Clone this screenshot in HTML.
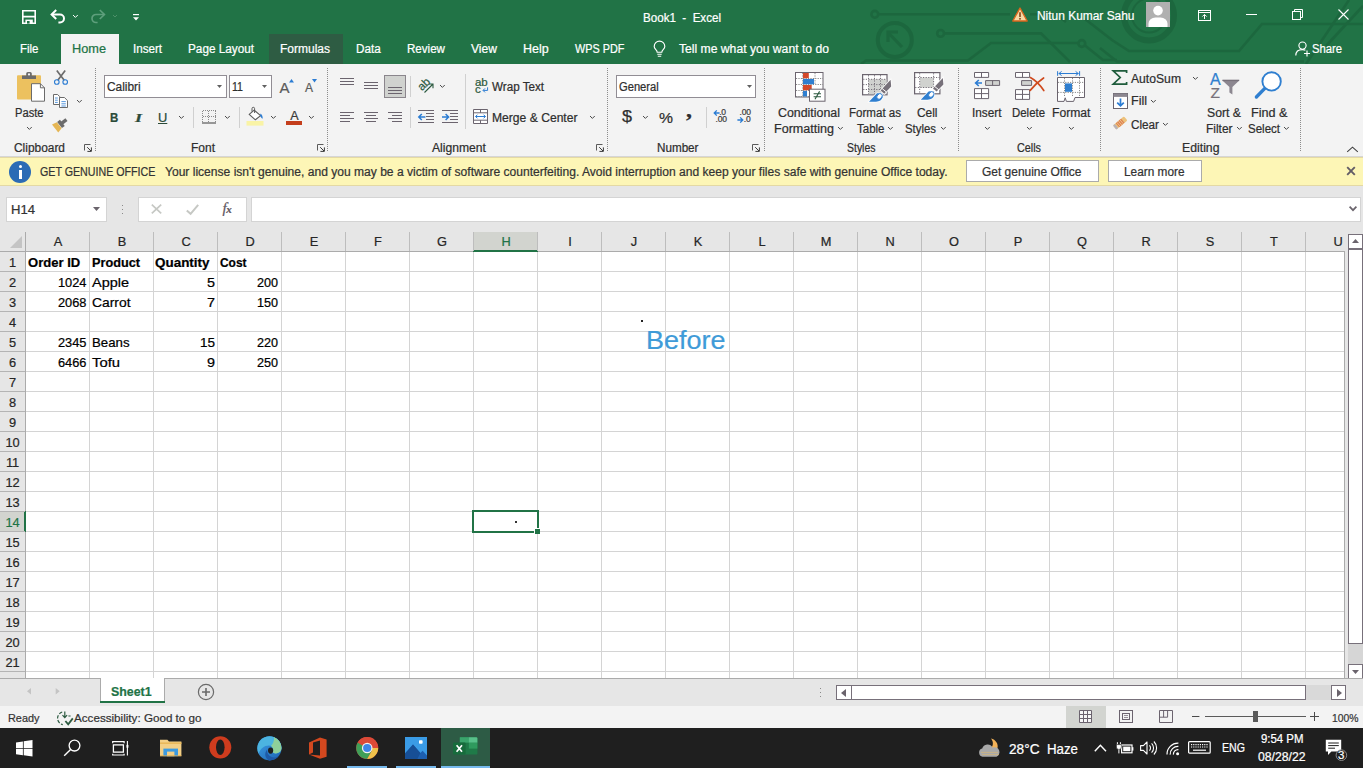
<!DOCTYPE html>
<html lang="en"><head><meta charset="utf-8"><title>Book1 - Excel</title>
<style>

*{box-sizing:border-box;margin:0;padding:0}
html,body{width:1363px;height:768px;overflow:hidden;background:#fff;font-family:"Liberation Sans",sans-serif}
body{position:relative}
.a{position:absolute}
.t{position:absolute;white-space:pre;line-height:1;transform-origin:0 50%;-webkit-text-stroke:.22px currentColor}
svg{position:absolute;overflow:visible}
.vs{position:absolute;width:0;border-left:1px dotted #8c8c8c}
.box{position:absolute;background:#fff;border:1px solid #918d94}

</style></head>
<body>
<div class="a" style="left:0px;top:0px;width:1363px;height:64px;background:#217346;"></div>
<svg style="left:840px;top:0" width="523" height="64" viewBox="840 0 523 64" fill="none" stroke="#1b633b" stroke-width="2.6" opacity=".7">
<circle cx="874.8" cy="14.3" r="3.4"/><path d="M878.6 14.3H1010M1030 14.3H1056L1066 22"/>
<circle cx="894.8" cy="40" r="17" stroke-width="4"/><path d="M902 47L888 32.5M888 42V32H898" stroke-width="3.2"/>
<circle cx="940.6" cy="33.4" r="3.4"/><path d="M944.4 33.4H1041L1070 62"/>
<path d="M861 64L866 60.5H968L991 43H1078"/><circle cx="1081.8" cy="43.5" r="3.4"/><path d="M1085 45.6L1103 60H1117"/>
<path d="M1085 19L1112 40L1129 51H1239L1262 24H1363"/>
<path d="M1100 48L1117 61.5H1304"/><path d="M1306 64L1349 0"/><path d="M1326 46L1363 6"/>
<circle cx="1149" cy="15.4" r="25" stroke-width="6"/><circle cx="1149" cy="15.4" r="17" stroke-width="2"/>
</svg>
<div class="a" style="left:61px;top:34px;width:58px;height:30px;background:#f3f3f3;"></div>
<div class="a" style="left:269px;top:34px;width:74px;height:30px;background:#2e5c43;"></div>
<div class="a" style="left:0px;top:64px;width:1363px;height:93px;background:#f3f3f3;"></div>
<div class="a" style="left:0px;top:156px;width:1363px;height:1px;background:#d6d6d6;"></div>
<div class="vs" style="left:95px;top:68px;height:83px"></div>
<div class="vs" style="left:327px;top:68px;height:83px"></div>
<div class="vs" style="left:607px;top:68px;height:83px"></div>
<div class="vs" style="left:764px;top:68px;height:83px"></div>
<div class="vs" style="left:958px;top:68px;height:83px"></div>
<div class="vs" style="left:1100px;top:68px;height:83px"></div>
<div class="vs" style="left:1300px;top:68px;height:83px"></div>
<div class="a" style="left:193px;top:107px;width:1px;height:21px;background:#d0d0d0;"></div>
<div class="a" style="left:239px;top:107px;width:1px;height:21px;background:#d0d0d0;"></div>
<div class="a" style="left:410px;top:76px;width:1px;height:21px;background:#d0d0d0;"></div>
<div class="a" style="left:410px;top:107px;width:1px;height:21px;background:#d0d0d0;"></div>
<div class="a" style="left:465px;top:74px;width:1px;height:55px;background:#d0d0d0;"></div>
<div class="a" style="left:706px;top:107px;width:1px;height:21px;background:#d0d0d0;"></div>
<div class="box" style="left:104px;top:75px;width:123px;height:23px;"></div>
<div class="box" style="left:229px;top:75px;width:43px;height:23px;"></div>
<div class="box" style="left:616px;top:75px;width:140px;height:23px;"></div>
<div class="a" style="left:384px;top:75px;width:22px;height:23px;background:#d0d2cf;border:1px solid #8a858c;"></div>
<div class="a" style="left:0px;top:157px;width:1363px;height:29px;background:#fdf6b6;border-top:1px solid #e4d9a4;border-bottom:1px solid #e4d9a4;"></div>
<div class="a" style="left:9px;top:161px;width:22px;height:22px;border-radius:50%;background:#2b6bb5"></div>
<div class="a" style="left:19px;top:165px;width:3px;height:3px;background:#fff;border-radius:50%;"></div>
<div class="a" style="left:19px;top:170px;width:3px;height:9px;background:#fff;"></div>
<div class="a" style="left:966px;top:160px;width:133px;height:22px;background:#fff;border:1px solid #ababab;"></div>
<div class="a" style="left:1108px;top:160px;width:94px;height:22px;background:#fff;border:1px solid #ababab;"></div>
<div class="a" style="left:0px;top:186px;width:1363px;height:46px;background:#e6e6e6;"></div>
<div class="a" style="left:6px;top:197px;width:101px;height:25px;background:#fff;border:1px solid #d4d4d4;"></div>
<div class="a" style="left:138px;top:197px;width:109px;height:25px;background:#fff;border:1px solid #d4d4d4;"></div>
<div class="a" style="left:251px;top:197px;width:1110px;height:25px;background:#fff;border:1px solid #d4d4d4;"></div>
<div class="a" style="left:122px;top:205px;width:1px;height:1px;background:#8a8a8a;"></div>
<div class="a" style="left:122px;top:209px;width:1px;height:1px;background:#8a8a8a;"></div>
<div class="a" style="left:122px;top:213px;width:1px;height:1px;background:#8a8a8a;"></div>
<div class="a" style="left:0px;top:232px;width:1345px;height:20px;background:#e6e6e6;"></div>
<div class="a" style="left:0px;top:252px;width:26px;height:426px;background:#e6e6e6;"></div>
<div class="a" style="left:473px;top:232px;width:65px;height:20px;background:#d2d4cf;"></div>
<div class="a" style="left:473px;top:250px;width:65px;height:2px;background:#217346;"></div>
<div class="a" style="left:0px;top:511px;width:26px;height:21px;background:#d2d4cf;"></div>
<div class="a" style="left:24px;top:511px;width:2px;height:21px;background:#217346;"></div>
<div class="a" style="left:0px;top:251px;width:1345px;height:1px;background:#ababab;z-index:0;"></div>
<div class="a" style="left:25px;top:232px;width:1px;height:446px;background:#ababab;"></div>
<div class="a" style="left:473px;top:250px;width:65px;height:2px;background:#217346;"></div>
<div class="a" style="left:24px;top:511px;width:2px;height:21px;background:#217346;"></div>
<div class="a" style="left:89px;top:252px;width:1px;height:426px;background:#d4d4d4"></div>
<div class="a" style="left:89px;top:232px;width:1px;height:19px;background:#bdbdbd"></div>
<div class="a" style="left:153px;top:252px;width:1px;height:426px;background:#d4d4d4"></div>
<div class="a" style="left:153px;top:232px;width:1px;height:19px;background:#bdbdbd"></div>
<div class="a" style="left:217px;top:252px;width:1px;height:426px;background:#d4d4d4"></div>
<div class="a" style="left:217px;top:232px;width:1px;height:19px;background:#bdbdbd"></div>
<div class="a" style="left:281px;top:252px;width:1px;height:426px;background:#d4d4d4"></div>
<div class="a" style="left:281px;top:232px;width:1px;height:19px;background:#bdbdbd"></div>
<div class="a" style="left:345px;top:252px;width:1px;height:426px;background:#d4d4d4"></div>
<div class="a" style="left:345px;top:232px;width:1px;height:19px;background:#bdbdbd"></div>
<div class="a" style="left:409px;top:252px;width:1px;height:426px;background:#d4d4d4"></div>
<div class="a" style="left:409px;top:232px;width:1px;height:19px;background:#bdbdbd"></div>
<div class="a" style="left:473px;top:252px;width:1px;height:426px;background:#d4d4d4"></div>
<div class="a" style="left:473px;top:232px;width:1px;height:19px;background:#bdbdbd"></div>
<div class="a" style="left:537px;top:252px;width:1px;height:426px;background:#d4d4d4"></div>
<div class="a" style="left:537px;top:232px;width:1px;height:19px;background:#bdbdbd"></div>
<div class="a" style="left:601px;top:252px;width:1px;height:426px;background:#d4d4d4"></div>
<div class="a" style="left:601px;top:232px;width:1px;height:19px;background:#bdbdbd"></div>
<div class="a" style="left:665px;top:252px;width:1px;height:426px;background:#d4d4d4"></div>
<div class="a" style="left:665px;top:232px;width:1px;height:19px;background:#bdbdbd"></div>
<div class="a" style="left:729px;top:252px;width:1px;height:426px;background:#d4d4d4"></div>
<div class="a" style="left:729px;top:232px;width:1px;height:19px;background:#bdbdbd"></div>
<div class="a" style="left:793px;top:252px;width:1px;height:426px;background:#d4d4d4"></div>
<div class="a" style="left:793px;top:232px;width:1px;height:19px;background:#bdbdbd"></div>
<div class="a" style="left:857px;top:252px;width:1px;height:426px;background:#d4d4d4"></div>
<div class="a" style="left:857px;top:232px;width:1px;height:19px;background:#bdbdbd"></div>
<div class="a" style="left:921px;top:252px;width:1px;height:426px;background:#d4d4d4"></div>
<div class="a" style="left:921px;top:232px;width:1px;height:19px;background:#bdbdbd"></div>
<div class="a" style="left:985px;top:252px;width:1px;height:426px;background:#d4d4d4"></div>
<div class="a" style="left:985px;top:232px;width:1px;height:19px;background:#bdbdbd"></div>
<div class="a" style="left:1049px;top:252px;width:1px;height:426px;background:#d4d4d4"></div>
<div class="a" style="left:1049px;top:232px;width:1px;height:19px;background:#bdbdbd"></div>
<div class="a" style="left:1113px;top:252px;width:1px;height:426px;background:#d4d4d4"></div>
<div class="a" style="left:1113px;top:232px;width:1px;height:19px;background:#bdbdbd"></div>
<div class="a" style="left:1177px;top:252px;width:1px;height:426px;background:#d4d4d4"></div>
<div class="a" style="left:1177px;top:232px;width:1px;height:19px;background:#bdbdbd"></div>
<div class="a" style="left:1241px;top:252px;width:1px;height:426px;background:#d4d4d4"></div>
<div class="a" style="left:1241px;top:232px;width:1px;height:19px;background:#bdbdbd"></div>
<div class="a" style="left:1305px;top:252px;width:1px;height:426px;background:#d4d4d4"></div>
<div class="a" style="left:1305px;top:232px;width:1px;height:19px;background:#bdbdbd"></div>
<div class="a" style="left:26px;top:271px;width:1319px;height:1px;background:#d4d4d4"></div>
<div class="a" style="left:0;top:271px;width:25px;height:1px;background:#b4b4b4"></div>
<div class="a" style="left:26px;top:291px;width:1319px;height:1px;background:#d4d4d4"></div>
<div class="a" style="left:0;top:291px;width:25px;height:1px;background:#b4b4b4"></div>
<div class="a" style="left:26px;top:311px;width:1319px;height:1px;background:#d4d4d4"></div>
<div class="a" style="left:0;top:311px;width:25px;height:1px;background:#b4b4b4"></div>
<div class="a" style="left:26px;top:331px;width:1319px;height:1px;background:#d4d4d4"></div>
<div class="a" style="left:0;top:331px;width:25px;height:1px;background:#b4b4b4"></div>
<div class="a" style="left:26px;top:351px;width:1319px;height:1px;background:#d4d4d4"></div>
<div class="a" style="left:0;top:351px;width:25px;height:1px;background:#b4b4b4"></div>
<div class="a" style="left:26px;top:371px;width:1319px;height:1px;background:#d4d4d4"></div>
<div class="a" style="left:0;top:371px;width:25px;height:1px;background:#b4b4b4"></div>
<div class="a" style="left:26px;top:391px;width:1319px;height:1px;background:#d4d4d4"></div>
<div class="a" style="left:0;top:391px;width:25px;height:1px;background:#b4b4b4"></div>
<div class="a" style="left:26px;top:411px;width:1319px;height:1px;background:#d4d4d4"></div>
<div class="a" style="left:0;top:411px;width:25px;height:1px;background:#b4b4b4"></div>
<div class="a" style="left:26px;top:431px;width:1319px;height:1px;background:#d4d4d4"></div>
<div class="a" style="left:0;top:431px;width:25px;height:1px;background:#b4b4b4"></div>
<div class="a" style="left:26px;top:451px;width:1319px;height:1px;background:#d4d4d4"></div>
<div class="a" style="left:0;top:451px;width:25px;height:1px;background:#b4b4b4"></div>
<div class="a" style="left:26px;top:471px;width:1319px;height:1px;background:#d4d4d4"></div>
<div class="a" style="left:0;top:471px;width:25px;height:1px;background:#b4b4b4"></div>
<div class="a" style="left:26px;top:491px;width:1319px;height:1px;background:#d4d4d4"></div>
<div class="a" style="left:0;top:491px;width:25px;height:1px;background:#b4b4b4"></div>
<div class="a" style="left:26px;top:511px;width:1319px;height:1px;background:#d4d4d4"></div>
<div class="a" style="left:0;top:511px;width:25px;height:1px;background:#b4b4b4"></div>
<div class="a" style="left:26px;top:531px;width:1319px;height:1px;background:#d4d4d4"></div>
<div class="a" style="left:0;top:531px;width:25px;height:1px;background:#b4b4b4"></div>
<div class="a" style="left:26px;top:551px;width:1319px;height:1px;background:#d4d4d4"></div>
<div class="a" style="left:0;top:551px;width:25px;height:1px;background:#b4b4b4"></div>
<div class="a" style="left:26px;top:571px;width:1319px;height:1px;background:#d4d4d4"></div>
<div class="a" style="left:0;top:571px;width:25px;height:1px;background:#b4b4b4"></div>
<div class="a" style="left:26px;top:591px;width:1319px;height:1px;background:#d4d4d4"></div>
<div class="a" style="left:0;top:591px;width:25px;height:1px;background:#b4b4b4"></div>
<div class="a" style="left:26px;top:611px;width:1319px;height:1px;background:#d4d4d4"></div>
<div class="a" style="left:0;top:611px;width:25px;height:1px;background:#b4b4b4"></div>
<div class="a" style="left:26px;top:631px;width:1319px;height:1px;background:#d4d4d4"></div>
<div class="a" style="left:0;top:631px;width:25px;height:1px;background:#b4b4b4"></div>
<div class="a" style="left:26px;top:651px;width:1319px;height:1px;background:#d4d4d4"></div>
<div class="a" style="left:0;top:651px;width:25px;height:1px;background:#b4b4b4"></div>
<div class="a" style="left:26px;top:671px;width:1319px;height:1px;background:#d4d4d4"></div>
<div class="a" style="left:0;top:671px;width:25px;height:1px;background:#b4b4b4"></div>
<svg style="left:10px;top:236px" width="12" height="12" viewBox="0 0 12 12"><path d="M12 0V12H0Z" fill="#c4c4c4"/></svg>
<div class="a" style="left:472px;top:510px;width:67px;height:23px;border:2px solid #217346;background:#fff;"></div>
<div class="a" style="left:534px;top:528px;width:6px;height:6px;background:#217346;border-top:1px solid #fff;border-left:1px solid #fff;"></div>
<div class="a" style="left:641px;top:320px;width:2px;height:2px;background:#222;"></div>
<div class="a" style="left:515px;top:521px;width:2px;height:2px;background:#333;"></div>
<div class="a" style="left:1345px;top:232px;width:18px;height:446px;background:#e6e6e6;"></div>
<div class="a" style="left:1348px;top:644px;width:15px;height:20px;background:#d6d6d6;"></div>
<div class="a" style="left:1344px;top:252px;width:1px;height:426px;background:#ababab;"></div>
<div class="a" style="left:1348px;top:234px;width:15px;height:15px;background:#fff;border:1px solid #77707a;"></div>
<div class="a" style="left:1348px;top:249px;width:15px;height:395px;background:#fff;border:1px solid #77707a;"></div>
<div class="a" style="left:1348px;top:664px;width:15px;height:15px;background:#fff;border:1px solid #77707a;"></div>
<svg style="left:1352px;top:239px" width="7" height="4" viewBox="0 0 7 4"><path d="M0 4L3.5 0L7 4Z" fill="#6a636c"/></svg>
<svg style="left:1352px;top:670px" width="7" height="4" viewBox="0 0 7 4"><path d="M0 0L3.5 4L7 0Z" fill="#6a636c"/></svg>
<div class="a" style="left:0px;top:678px;width:1363px;height:28px;background:#e6e6e6;"></div>
<div class="a" style="left:0px;top:678px;width:1363px;height:1px;background:#ababab;"></div>
<div class="a" style="left:100px;top:678px;width:65px;height:25px;background:#fff;border-left:1px solid #ababab;border-right:1px solid #ababab;"></div>
<div class="a" style="left:100px;top:701px;width:65px;height:2px;background:#217346;"></div>
<svg style="left:27.3px;top:688.4px" width="34" height="7" viewBox="0 0 34 7"><path d="M4 0V6.4L0 3.2Z M28.7 0V6.4L32.7 3.2Z" fill="#c4c4c4"/></svg>
<svg style="left:197px;top:683px" width="18" height="18" viewBox="0 0 18 18" fill="none" stroke="#6a6a6a" stroke-width="1.2"><circle cx="9" cy="9" r="7.6"/><path d="M9 5V13M5 9H13" stroke-width="1.6"/></svg>
<div class="a" style="left:820px;top:688px;width:1px;height:1px;background:#8a8a8a;"></div>
<div class="a" style="left:820px;top:692px;width:1px;height:1px;background:#8a8a8a;"></div>
<div class="a" style="left:820px;top:696px;width:1px;height:1px;background:#8a8a8a;"></div>
<div class="a" style="left:836px;top:685px;width:16px;height:15px;background:#fff;border:1px solid #77707a;"></div>
<div class="a" style="left:851px;top:685px;width:455px;height:15px;background:#fff;border:1px solid #77707a;"></div>
<div class="a" style="left:1306px;top:685px;width:25px;height:15px;background:#d9d9d9;"></div>
<div class="a" style="left:1331px;top:685px;width:15px;height:15px;background:#fff;border:1px solid #77707a;"></div>
<svg style="left:841px;top:688.5px" width="5" height="8" viewBox="0 0 5 8"><path d="M5 0V8L0 4Z" fill="#6a636c"/></svg>
<svg style="left:1336.5px;top:688.5px" width="5" height="8" viewBox="0 0 5 8"><path d="M0 0V8L5 4Z" fill="#6a636c"/></svg>
<div class="a" style="left:0px;top:706px;width:1363px;height:22px;background:#f3f3f3;"></div>
<div class="a" style="left:1066px;top:706px;width:40px;height:22px;background:#d2d4d0;"></div>
<div class="a" style="left:1205px;top:716px;width:101px;height:1px;background:#5a5a5a;"></div>
<div class="a" style="left:1253px;top:711px;width:5px;height:11px;background:#5a5a5a;"></div>
<div class="a" style="left:0px;top:728px;width:1363px;height:40px;background:#1f1f1f;"></div>
<div class="a" style="left:441px;top:728px;width:49px;height:40px;background:#2d5b45;"></div>
<div class="a" style="left:347px;top:766px;width:40px;height:2px;background:#76b9ed;"></div>
<div class="a" style="left:396px;top:766px;width:40px;height:2px;background:#76b9ed;"></div>
<div class="a" style="left:441px;top:766px;width:49px;height:2px;background:#76b9ed;"></div>
<svg style="left:22px;top:10px" width="14" height="14" viewBox="0 0 14 14" ><path d="M.8.8H13.2V13.2H.8Z M.8 6.6H13.2" fill="none" stroke="#fff" stroke-width="1.6"/><path d="M3.4 9.6H10.8V13.3H3.4Z" fill="#fff"/><rect x="5" y="11" width="2.6" height="2.6" fill="#217346"/></svg>
<svg style="left:50px;top:9px" width="17" height="16" viewBox="0 0 17 16" ><path d="M2 5.5H10A4 4 0 0 1 10 13.5H8.4" fill="none" stroke="#fff" stroke-width="2"/><path d="M6.2 1L1.6 5.5L6.2 10" fill="none" stroke="#fff" stroke-width="2"/></svg>
<svg style="left:71.89999999999999px;top:14.100000000000001px" width="6.8" height="4.4" viewBox="0 0 6.8 4.4" ><path d="M1 1L3.4 3.4L5.8 1" fill="none" stroke="#fff" stroke-width="1.0"/></svg>
<svg style="left:89px;top:9px" width="17" height="16" viewBox="0 0 17 16" ><path d="M15 5.5H7A4 4 0 0 0 7 13.5H8.6" fill="none" stroke="#5e9f7c" stroke-width="1.7"/><path d="M10.8 1L15.4 5.5L10.8 10" fill="none" stroke="#5e9f7c" stroke-width="1.7"/></svg>
<svg style="left:111.5px;top:14.3px" width="6" height="4" viewBox="0 0 6 4" ><path d="M1 1L3.0 3L5 1" fill="none" stroke="#4d9069" stroke-width="1.0"/></svg>
<svg style="left:132.5px;top:13.5px" width="6" height="7" viewBox="0 0 6 7" ><path d="M0 .6H6" stroke="#fff" stroke-width="1.2"/><path d="M0 3.2H6L3 6.4Z" fill="#fff"/></svg>
<svg style="left:1012px;top:7px" width="16" height="15" viewBox="0 0 16 15" ><path d="M8 1L15.2 14H.8Z" fill="#f7d9a4" stroke="#d8661c" stroke-width="1.4" stroke-linejoin="round"/><path d="M8 5.2V10" stroke="#7a3b10" stroke-width="1.5"/><rect x="7.25" y="11" width="1.5" height="1.6" fill="#7a3b10"/></svg>
<svg style="left:1146px;top:2px" width="24" height="25" viewBox="0 0 24 25" ><rect width="24" height="25" fill="#b0b0b0"/><circle cx="12" cy="8.6" r="4.8" fill="#fff"/><path d="M2.5 25V21.5A7 6 0 0 1 9.5 15.5H14.5A7 6 0 0 1 21.5 21.5V25Z" fill="#fff"/></svg>
<svg style="left:1198px;top:10px" width="13" height="11" viewBox="0 0 13 11" ><rect x=".5" y=".5" width="12" height="10" fill="none" stroke="#fff"/><path d="M.5 2.5H12.5" stroke="#fff"/><path d="M6.5 9V4.6M4.3 6.6L6.5 4.4L8.7 6.6" fill="none" stroke="#fff"/></svg>
<svg style="left:1246px;top:14px" width="11" height="1" viewBox="0 0 11 1" ><rect width="11" height="1" fill="#fff"/></svg>
<svg style="left:1292px;top:9px" width="11" height="11" viewBox="0 0 11 11" ><rect x=".5" y="2.5" width="8" height="8" fill="none" stroke="#fff"/><path d="M2.5 2.5V.5H10.5V8.5H8.5" fill="none" stroke="#fff"/></svg>
<svg style="left:1338px;top:9px" width="11" height="11" viewBox="0 0 11 11" ><path d="M.5.5L10.5 10.5M10.5.5L.5 10.5" stroke="#fff" stroke-width="1.1"/></svg>
<svg style="left:653px;top:41px" width="13" height="17" viewBox="0 0 13 17" ><path d="M4.2 11.2C4.2 9 1.2 8.2 1.2 5.4A5.3 5.3 0 0 1 11.8 5.4C11.8 8.2 8.8 9 8.8 11.2Z" fill="none" stroke="#fff" stroke-width="1.15"/><path d="M4.3 13.2H8.7M4.8 15.2H8.2" stroke="#fff" stroke-width="1.15"/></svg>
<svg style="left:1295px;top:41px" width="16" height="16" viewBox="0 0 16 16" ><circle cx="7.5" cy="4.6" r="3.6" fill="none" stroke="#fff" stroke-width="1.15"/><path d="M.8 14.5C.8 10.6 3.6 8.6 7.5 8.6C8.6 8.6 9.6 8.8 10.4 9.2" fill="none" stroke="#fff" stroke-width="1.15"/><path d="M12 9.5V15.5M9 12.5H15" stroke="#fff" stroke-width="1.15"/></svg>
<svg style="left:16px;top:71px" width="30" height="32" viewBox="0 0 30 32" ><rect x="1" y="4.2" width="24" height="24.4" rx="1" fill="#ecc15f"/><path d="M6 8V4.6H10.2V2.6A1.6 1.6 0 0 1 11.8 1H14.2A1.6 1.6 0 0 1 15.8 2.6V4.6H20V8Z" fill="#6b6b6b"/><circle cx="13" cy="3.4" r="1.1" fill="#f3f3f3"/><path d="M15.5 12.7H24.4L28.5 16.8V30.2H15.5Z" fill="#fff" stroke="#6b6b6b" stroke-width="1"/><path d="M24.4 12.7V16.8H28.5" fill="none" stroke="#6b6b6b" stroke-width="1"/></svg>
<svg style="left:25.6px;top:125.8px" width="6.8" height="4.4" viewBox="0 0 6.8 4.4" ><path d="M1 1L3.4 3.4L5.8 1" fill="none" stroke="#505050" stroke-width="1.0"/></svg>
<svg style="left:53px;top:70px" width="16" height="16" viewBox="0 0 16 16" ><path d="M3.8 .6L11.2 10.2M12.2 .6L4.8 10.2" stroke="#6b6b6b" stroke-width="1.7" fill="none"/><circle cx="3.8" cy="12" r="2.3" fill="none" stroke="#2b7cd3" stroke-width="1.1"/><circle cx="12.2" cy="12" r="2.3" fill="none" stroke="#2b7cd3" stroke-width="1.1"/></svg>
<svg style="left:52px;top:93px" width="17" height="16" viewBox="0 0 17 16" ><path d="M1.5 1.5H5.6L7.6 3.5V11.5H1.5Z" fill="#fff" stroke="#6b6b6b"/><path d="M3 5H5.8M3 7.2H5.8M3 9.4H5.8" stroke="#2b7cd3" stroke-width=".8"/><path d="M7.5 4.5H12.4L15.5 7.6V14.5H7.5Z" fill="#fff" stroke="#6b6b6b"/><path d="M9.4 8.6H13.8M9.4 10.8H13.8M9.4 13H13.8" stroke="#2b7cd3" stroke-width=".8"/></svg>
<svg style="left:75.6px;top:99.1px" width="6.8" height="4.4" viewBox="0 0 6.8 4.4" ><path d="M1 1L3.4 3.4L5.8 1" fill="none" stroke="#505050" stroke-width="1.0"/></svg>
<svg style="left:53px;top:116px" width="17" height="15" viewBox="0 0 17 15" ><g transform="rotate(-38 8.5 7.5)"><rect x="9.2" y="5.8" width="6.6" height="3.4" fill="#6b6b6b" transform="translate(-1 0)"/><rect x="6" y="3.6" width="3.6" height="7.8" fill="#6b6b6b"/><path d="M5.6 3.6V11.4L.4 12.6V2.4Z" fill="#e5b654"/></g></svg>
<svg style="left:84px;top:144px" width="8" height="8" viewBox="0 0 8 8" ><path d="M.5 6.5V.5H6.5" fill="none" stroke="#5a5a5a" stroke-width="1"/><path d="M3.2 3.2L7 7M7.4 3.4V7.4H3.4" fill="none" stroke="#3a3a3a" stroke-width="1"/></svg>
<svg style="left:217.0px;top:85.0px" width="5" height="3" viewBox="0 0 5 3" ><path d="M0 0H5L2.5 3Z" fill="#606060"/></svg>
<svg style="left:262.0px;top:85.0px" width="5" height="3" viewBox="0 0 5 3" ><path d="M0 0H5L2.5 3Z" fill="#606060"/></svg>
<span class="t" style="left:279.6px;top:79.5px;font-size:15px;color:#5a5a5a">A</span>
<svg style="left:288.5px;top:78.5px" width="5" height="3.5" viewBox="0 0 5 3.5" ><path d="M0 3.5L2.5 0L5 3.5Z" fill="#2b7cd3"/></svg>
<span class="t" style="left:305px;top:82px;font-size:12px;color:#5a5a5a">A</span>
<svg style="left:312px;top:78.5px" width="5" height="3.5" viewBox="0 0 5 3.5" ><path d="M0 0H5L2.5 3.5Z" fill="#2b7cd3"/></svg>
<svg style="left:177.9px;top:115.3px" width="6.8" height="4.4" viewBox="0 0 6.8 4.4" ><path d="M1 1L3.4 3.4L5.8 1" fill="none" stroke="#4a4a4a" stroke-width="1.0"/></svg>
<svg style="left:202px;top:109.5px" width="14" height="14" viewBox="0 0 14 14" ><path d="M.5 .5H13.5M.5 6.5H13.5M.5 .5V12M6.5 .5V12M13.5 .5V12" stroke="#8a8a8a" stroke-dasharray="1 1" fill="none" shape-rendering="crispEdges"/><path d="M0 13H14" stroke="#5a5a5a" stroke-width="1.2"/></svg>
<svg style="left:223.6px;top:115.3px" width="6.8" height="4.4" viewBox="0 0 6.8 4.4" ><path d="M1 1L3.4 3.4L5.8 1" fill="none" stroke="#4a4a4a" stroke-width="1.0"/></svg>
<svg style="left:246px;top:107px" width="19" height="19" viewBox="0 0 19 19" ><rect x=".5" y="14" width="17" height="4.6" fill="#f9f3a6"/><path d="M8.2 3.2L14.6 8.6L9.4 12.8L3.2 7.4Z" fill="#fff" stroke="#5a5a5a" stroke-width="1.1" stroke-linejoin="round"/><path d="M8.6 6V1.6A1.3 1.3 0 0 0 6 1.6V4.6" fill="none" stroke="#5a5a5a" stroke-width="1"/><path d="M14.4 6.6C16 8 17 9.6 16.6 11.8C15.4 11 14.8 10.2 14.2 9Z" fill="#2b7cd3"/></svg>
<svg style="left:269.6px;top:115.3px" width="6.8" height="4.4" viewBox="0 0 6.8 4.4" ><path d="M1 1L3.4 3.4L5.8 1" fill="none" stroke="#4a4a4a" stroke-width="1.0"/></svg>
<span class="t" style="left:290.2px;top:109.6px;font-size:12.6px;color:#3a3a3a">A</span>
<svg style="left:286px;top:121px" width="16" height="4" viewBox="0 0 16 4" ><rect width="16" height="4" fill="#c43e1c"/></svg>
<svg style="left:308.40000000000003px;top:115.3px" width="6.8" height="4.4" viewBox="0 0 6.8 4.4" ><path d="M1 1L3.4 3.4L5.8 1" fill="none" stroke="#4a4a4a" stroke-width="1.0"/></svg>
<svg style="left:316.6px;top:144px" width="8" height="8" viewBox="0 0 8 8" ><path d="M.5 6.5V.5H6.5" fill="none" stroke="#5a5a5a" stroke-width="1"/><path d="M3.2 3.2L7 7M7.4 3.4V7.4H3.4" fill="none" stroke="#3a3a3a" stroke-width="1"/></svg>
<div class="a" style="left:340px;top:78px;width:14px;height:1px;background:#6b646e"></div>
<div class="a" style="left:340px;top:81px;width:14px;height:1px;background:#6b646e"></div>
<div class="a" style="left:340px;top:84px;width:14px;height:1px;background:#6b646e"></div>
<div class="a" style="left:364px;top:82px;width:14px;height:1px;background:#6b646e"></div>
<div class="a" style="left:364px;top:85px;width:14px;height:1px;background:#6b646e"></div>
<div class="a" style="left:364px;top:88px;width:14px;height:1px;background:#6b646e"></div>
<div class="a" style="left:388px;top:87px;width:14px;height:1px;background:#6b646e"></div>
<div class="a" style="left:388px;top:90px;width:14px;height:1px;background:#6b646e"></div>
<div class="a" style="left:388px;top:93px;width:14px;height:1px;background:#6b646e"></div>
<div class="a" style="left:340px;top:112px;width:14px;height:1px;background:#6b646e"></div>
<div class="a" style="left:340px;top:115px;width:10px;height:1px;background:#6b646e"></div>
<div class="a" style="left:340px;top:118px;width:14px;height:1px;background:#6b646e"></div>
<div class="a" style="left:340px;top:121px;width:10px;height:1px;background:#6b646e"></div>
<div class="a" style="left:364px;top:112px;width:14px;height:1px;background:#6b646e"></div>
<div class="a" style="left:366px;top:115px;width:10px;height:1px;background:#6b646e"></div>
<div class="a" style="left:364px;top:118px;width:14px;height:1px;background:#6b646e"></div>
<div class="a" style="left:366px;top:121px;width:10px;height:1px;background:#6b646e"></div>
<div class="a" style="left:388px;top:112px;width:14px;height:1px;background:#6b646e"></div>
<div class="a" style="left:392px;top:115px;width:10px;height:1px;background:#6b646e"></div>
<div class="a" style="left:388px;top:118px;width:14px;height:1px;background:#6b646e"></div>
<div class="a" style="left:392px;top:121px;width:10px;height:1px;background:#6b646e"></div>
<span class="t" style="left:417.5px;top:78.5px;font-size:11.5px;color:#2c5a40;transform:rotate(-45deg);transform-origin:50% 50%;letter-spacing:-.3px">ab</span>
<svg style="left:423px;top:82px" width="12" height="12" viewBox="0 0 12 12" ><path d="M1.5 10.5L10 2M10 6.2V2H5.8" fill="none" stroke="#2c5a40" stroke-width="1.1"/></svg>
<svg style="left:438.6px;top:84.1px" width="6.8" height="4.4" viewBox="0 0 6.8 4.4" ><path d="M1 1L3.4 3.4L5.8 1" fill="none" stroke="#4a4a4a" stroke-width="1.0"/></svg>
<span class="t" style="left:475px;top:76.6px;font-size:11.5px;color:#2c5a40;letter-spacing:-.2px">ab</span>
<span class="t" style="left:475px;top:84.2px;font-size:11.5px;color:#2c5a40">c</span>
<svg style="left:481.5px;top:87px" width="7" height="6" viewBox="0 0 7 6" ><path d="M5.6 .3V3.4H1.2M3 1.4L1 3.4L3 5.4" fill="none" stroke="#2b7cd3" stroke-width="1"/></svg>
<div class="a" style="left:418px;top:110px;width:16px;height:1px;background:#6b646e"></div>
<div class="a" style="left:426px;top:113px;width:8px;height:1px;background:#6b646e"></div>
<div class="a" style="left:426px;top:116px;width:8px;height:1px;background:#6b646e"></div>
<div class="a" style="left:426px;top:119px;width:8px;height:1px;background:#6b646e"></div>
<div class="a" style="left:418px;top:122px;width:16px;height:1px;background:#6b646e"></div>
<svg style="left:418px;top:112.5px" width="8" height="8" viewBox="0 0 8 8" ><path d="M7.4 4H1M3.8 1L.8 4L3.8 7" fill="none" stroke="#2b7cd3" stroke-width="1.5"/></svg>
<div class="a" style="left:442px;top:110px;width:16px;height:1px;background:#6b646e"></div>
<div class="a" style="left:450px;top:113px;width:8px;height:1px;background:#6b646e"></div>
<div class="a" style="left:450px;top:116px;width:8px;height:1px;background:#6b646e"></div>
<div class="a" style="left:450px;top:119px;width:8px;height:1px;background:#6b646e"></div>
<div class="a" style="left:442px;top:122px;width:16px;height:1px;background:#6b646e"></div>
<svg style="left:442px;top:112.5px" width="8" height="8" viewBox="0 0 8 8" ><path d="M0 4H6.4M3.6 1L6.6 4L3.6 7" fill="none" stroke="#2b7cd3" stroke-width="1.5"/></svg>
<svg style="left:473px;top:109px" width="15" height="15" viewBox="0 0 15 15" ><path d="M.5 .5H14.5V14.5H.5Z M.5 3.8H14.5M.5 11.2H14.5M7.5 .5V3.8M7.5 11.2V14.5" fill="#fff" stroke="#6b646e"/><path d="M2.6 7.5H12.4M4.4 5.7L2.6 7.5L4.4 9.3M10.6 5.7L12.4 7.5L10.6 9.3" fill="none" stroke="#2b7cd3" stroke-width="1"/></svg>
<svg style="left:588.6px;top:115.39999999999999px" width="6.8" height="4.4" viewBox="0 0 6.8 4.4" ><path d="M1 1L3.4 3.4L5.8 1" fill="none" stroke="#4a4a4a" stroke-width="1.0"/></svg>
<svg style="left:596px;top:144px" width="8" height="8" viewBox="0 0 8 8" ><path d="M.5 6.5V.5H6.5" fill="none" stroke="#5a5a5a" stroke-width="1"/><path d="M3.2 3.2L7 7M7.4 3.4V7.4H3.4" fill="none" stroke="#3a3a3a" stroke-width="1"/></svg>
<svg style="left:746.5px;top:85.0px" width="5" height="3" viewBox="0 0 5 3" ><path d="M0 0H5L2.5 3Z" fill="#606060"/></svg>
<svg style="left:641.6px;top:115.3px" width="6.8" height="4.4" viewBox="0 0 6.8 4.4" ><path d="M1 1L3.4 3.4L5.8 1" fill="none" stroke="#4a4a4a" stroke-width="1.0"/></svg>
<svg style="left:713px;top:109px" width="16" height="15" viewBox="0 0 16 15" ><path d="M6.6 4H1.2M3.8 1.4L1.2 4L3.8 6.6" fill="none" stroke="#2b7cd3" stroke-width="1.3"/></svg>
<span class="t" style="left:719.2px;top:108.4px;font-size:8.5px;color:#3b3b3b;letter-spacing:-.2px">.0</span>
<span class="t" style="left:715.6px;top:115.4px;font-size:8.5px;color:#3b3b3b;letter-spacing:-.2px">.00</span>
<span class="t" style="left:739.6px;top:108.4px;font-size:8.5px;color:#3b3b3b;letter-spacing:-.2px">.00</span>
<svg style="left:737px;top:116px" width="8" height="8" viewBox="0 0 8 8" ><path d="M.4 4H5.8M3.2 1.4L5.8 4L3.2 6.6" fill="none" stroke="#2b7cd3" stroke-width="1.3"/></svg>
<span class="t" style="left:743.8px;top:115.4px;font-size:8.5px;color:#3b3b3b;letter-spacing:-.2px">.0</span>
<svg style="left:751.6px;top:144px" width="8" height="8" viewBox="0 0 8 8" ><path d="M.5 6.5V.5H6.5" fill="none" stroke="#5a5a5a" stroke-width="1"/><path d="M3.2 3.2L7 7M7.4 3.4V7.4H3.4" fill="none" stroke="#3a3a3a" stroke-width="1"/></svg>
<svg style="left:795px;top:72px" width="31" height="30" viewBox="0 0 31 30" ><rect x=".5" y=".5" width="27.5" height="24.5" fill="#fff" stroke="#6b646e"/><path d="M7.7 1V25M20 1V12M1 6.5H28M1 12.5H28M1 18.5H14M1 24.5H14" stroke="#8a8a8a" stroke-dasharray="1.2 1.2" fill="none"/><rect x="8" y="1" width="5.8" height="5.2" fill="#d4492a"/><rect x="8" y="7" width="11" height="5.2" fill="#2f7fd0"/><rect x="8" y="13" width="8.7" height="5.2" fill="#d4492a"/><rect x="8" y="19" width="4" height="5.4" fill="#2f7fd0"/><rect x="14.5" y="17.2" width="15.5" height="12" fill="#fff" stroke="#6b646e"/><path d="M18.6 21.8H26M18.6 24.8H26M24.6 19.4L20 27.2" stroke="#2c5a40" stroke-width="1.1" fill="none"/></svg>
<svg style="left:837.1px;top:126.39999999999999px" width="6.8" height="4.4" viewBox="0 0 6.8 4.4" ><path d="M1 1L3.4 3.4L5.8 1" fill="none" stroke="#4a4a4a" stroke-width="1.0"/></svg>
<svg style="left:862px;top:74px" width="31" height="29" viewBox="0 0 31 29" ><rect x=".6" y=".6" width="24.4" height="20.2" fill="#fff" stroke="#6b646e" stroke-width="1.2"/><rect x="6.5" y="5.2" width="18" height="15" fill="#d0d2cf"/><path d="M6.5 1.2V20M12.5 1.2V20M18.5 1.2V20M1.2 5.3H24.6M1.2 10.6H24.6M1.2 15.5H24.6" stroke="#77717a" stroke-dasharray="1.2 1.4" fill="none"/><path d="M28.6 5.8L29.2 12.4L22.2 19.8L18.6 16.6Z" fill="#77717a" stroke="#fff" stroke-width="1.6" paint-order="stroke"/><path d="M20.2 14.6L24.4 18" stroke="#fff" stroke-width="1"/><path d="M7 27.7L15 19.2Q21 18.6 20.6 23.2Q19.4 27.2 14 27.7Z" fill="#2f7fd0" stroke="#fff" stroke-width="1.4" paint-order="stroke"/><ellipse cx="17.5" cy="22.4" rx="2.3" ry="3.1" transform="rotate(42 17.5 22.4)" fill="#fff" stroke="#2f7fd0" stroke-width=".9"/></svg>
<svg style="left:886.6px;top:126.39999999999999px" width="6.8" height="4.4" viewBox="0 0 6.8 4.4" ><path d="M1 1L3.4 3.4L5.8 1" fill="none" stroke="#4a4a4a" stroke-width="1.0"/></svg>
<svg style="left:914px;top:72px" width="31" height="29" viewBox="0 0 31 29" ><rect x=".6" y=".6" width="25.3" height="21.2" fill="#fff" stroke="#6b646e" stroke-width="1.2"/><rect x="5.8" y="5.6" width="13.8" height="10" fill="#d0d2cf"/><path d="M5.7 1.2V21M19.6 1.2V21M1.2 5.5H25.5M1.2 15.5H25.5" stroke="#77717a" stroke-dasharray="1.2 1.4" fill="none"/><path d="M28.8 5.9L29.4 12.4L22.6 19.6L19 16.4Z" fill="#77717a" stroke="#fff" stroke-width="1.6" paint-order="stroke"/><path d="M20.6 14.4L24.8 17.8" stroke="#fff" stroke-width="1"/><path d="M6.8 27.7L14.6 19.4Q20.6 18.8 20.2 23.4Q19 27.2 13.6 27.7Z" fill="#2f7fd0" stroke="#fff" stroke-width="1.4" paint-order="stroke"/><ellipse cx="17.3" cy="22.5" rx="2.3" ry="3.1" transform="rotate(42 17.3 22.5)" fill="#fff" stroke="#2f7fd0" stroke-width=".9"/></svg>
<svg style="left:939.6px;top:126.39999999999999px" width="6.8" height="4.4" viewBox="0 0 6.8 4.4" ><path d="M1 1L3.4 3.4L5.8 1" fill="none" stroke="#4a4a4a" stroke-width="1.0"/></svg>
<svg style="left:974px;top:72px" width="27" height="28" viewBox="0 0 27 28" ><path d="M.5 .5H14.6V5.4H.5ZM7.5 .5V5.4" fill="#fff" stroke="#6b646e"/><path d="M11.6 8.6H25.6V13.4H11.6ZM18.6 8.6V13.4" fill="#d0d2cf" stroke="#6b646e"/><path d="M.5 16.6H14.6V26.6H.5ZM7.5 16.6V26.6M.5 21.6H14.6" fill="#fff" stroke="#6b646e"/><path d="M8 11H1.8M4.8 8L1.6 11L4.8 14" fill="none" stroke="#2b7cd3" stroke-width="1.6"/></svg>
<svg style="left:983.6px;top:125.8px" width="6.8" height="4.4" viewBox="0 0 6.8 4.4" ><path d="M1 1L3.4 3.4L5.8 1" fill="none" stroke="#4a4a4a" stroke-width="1.0"/></svg>
<svg style="left:1015px;top:72px" width="31" height="28" viewBox="0 0 31 28" ><path d="M.5 .5H14.6V5.4H.5ZM7.5 .5V5.4" fill="#fff" stroke="#6b646e"/><path d="M6.6 8.6H16.6V13.4H6.6Z" fill="#d0d2cf" stroke="#6b646e"/><path d="M.5 17.6H14.6V27.4H.5ZM7.5 17.6V27.4M.5 22.4H14.6" fill="#fff" stroke="#6b646e"/><path d="M15.4 5.6C20 8 25 13 28.8 18.6M28.6 6C23.4 9.4 19 13.6 15.2 18.4" fill="none" stroke="#cf4a1e" stroke-width="1.7" stroke-linecap="round"/></svg>
<svg style="left:1025.6px;top:125.8px" width="6.8" height="4.4" viewBox="0 0 6.8 4.4" ><path d="M1 1L3.4 3.4L5.8 1" fill="none" stroke="#4a4a4a" stroke-width="1.0"/></svg>
<svg style="left:1057px;top:71px" width="29" height="31" viewBox="0 0 29 31" ><path d="M.6 .2V4.8M22.6 .2V4.8M1.6 2.5H21.6M4.6 .4L2 2.5L4.6 4.6M18.6 .4L21.2 2.5L18.6 4.6" fill="none" stroke="#2b7cd3" stroke-width="1"/><path d="M.5 6.5H27.5V26.5H18L16.6 30.4H9.4L8.2 26.8L7 30.4H.5Z" fill="#fff" stroke="#6b646e"/><path d="M7.5 7V26M15.5 7V26M22.5 7V26M1 11.4H27M1 21.4H27" stroke="#8a8a8a" stroke-dasharray="1.2 1.2" fill="none"/><rect x="8" y="12.4" width="7" height="8.4" fill="#2f7fd0"/></svg>
<svg style="left:1067.6px;top:125.8px" width="6.8" height="4.4" viewBox="0 0 6.8 4.4" ><path d="M1 1L3.4 3.4L5.8 1" fill="none" stroke="#4a4a4a" stroke-width="1.0"/></svg>
<svg style="left:1112px;top:70px" width="16" height="15" viewBox="0 0 16 15" ><path d="M14.6 3V.9H1.2L8.2 7.5L1.2 14.1H14.6V12" fill="none" stroke="#1f5c3c" stroke-width="1.7"/></svg>
<svg style="left:1191.6px;top:76.3px" width="6.8" height="4.4" viewBox="0 0 6.8 4.4" ><path d="M1 1L3.4 3.4L5.8 1" fill="none" stroke="#4a4a4a" stroke-width="1.0"/></svg>
<svg style="left:1113px;top:93px" width="15" height="16" viewBox="0 0 15 16" ><rect x=".5" y=".5" width="14" height="15" fill="#fff" stroke="#6b646e"/><rect x=".5" y=".5" width="14" height="3.4" fill="#8c8790"/><path d="M7.5 5.6V12.6M4.2 9.6L7.5 12.8L10.8 9.6" fill="none" stroke="#2b7cd3" stroke-width="1.7"/></svg>
<svg style="left:1149.6px;top:99.1px" width="6.8" height="4.4" viewBox="0 0 6.8 4.4" ><path d="M1 1L3.4 3.4L5.8 1" fill="none" stroke="#4a4a4a" stroke-width="1.0"/></svg>
<svg style="left:1112px;top:116px" width="16" height="14" viewBox="0 0 16 14" ><g transform="rotate(-40 8 7)"><rect x="1" y="4.4" width="14.4" height="5.4" rx="1.2" fill="#ecc27c"/><rect x="4.6" y="4.4" width="7" height="5.4" fill="#de8450"/><path d="M6 4.4V9.8M8 4.4V9.8M10 4.4V9.8" stroke="#f0d0a0" stroke-width=".7"/><rect x="1" y="4.4" width="2.4" height="5.4" rx="1" fill="#b9b2b8"/></g></svg>
<svg style="left:1161.6px;top:121.8px" width="6.8" height="4.4" viewBox="0 0 6.8 4.4" ><path d="M1 1L3.4 3.4L5.8 1" fill="none" stroke="#4a4a4a" stroke-width="1.0"/></svg>
<span class="t" style="left:1210px;top:71.6px;font-size:16px;color:#2f7fd0">A</span>
<span class="t" style="left:1210.6px;top:85.2px;font-size:15.5px;color:#77717a">Z</span>
<svg style="left:1222px;top:80px" width="18" height="15" viewBox="0 0 18 15" ><path d="M.4 .4H17.2L10.4 7V14.4L7.4 12.6V7Z" fill="#8c8790"/><path d="M.4 .4H17.2" stroke="#77717a" stroke-width="1.4"/></svg>
<svg style="left:1235.6px;top:126.39999999999999px" width="6.8" height="4.4" viewBox="0 0 6.8 4.4" ><path d="M1 1L3.4 3.4L5.8 1" fill="none" stroke="#4a4a4a" stroke-width="1.0"/></svg>
<svg style="left:1254px;top:70px" width="30" height="29" viewBox="0 0 30 29" ><path d="M10.8 18.4L2.4 27" stroke="#2f7fd0" stroke-width="3.4" stroke-linecap="round"/><circle cx="17.6" cy="11.4" r="9.2" fill="#fff" stroke="#2f7fd0" stroke-width="1.9"/></svg>
<svg style="left:1282.8999999999999px;top:126.39999999999999px" width="6.8" height="4.4" viewBox="0 0 6.8 4.4" ><path d="M1 1L3.4 3.4L5.8 1" fill="none" stroke="#4a4a4a" stroke-width="1.0"/></svg>
<svg style="left:1346px;top:146px" width="13" height="8" viewBox="0 0 13 8" ><path d="M1.2 5.8L6.5 1.2L11.8 5.8" fill="none" stroke="#404040" stroke-width="1.1"/></svg>
<svg style="left:1346.2px;top:166px" width="10" height="10" viewBox="0 0 10 10" ><path d="M1.2 1.2L8.8 8.8M8.8 1.2L1.2 8.8" stroke="#625c66" stroke-width="1.9"/></svg>
<svg style="left:93px;top:206.5px" width="7" height="4" viewBox="0 0 7 4" ><path d="M0 0H7L3.5 4Z" fill="#6a646c"/></svg>
<svg style="left:150.5px;top:204px" width="11" height="10" viewBox="0 0 11 10" ><path d="M.8 .6L10.2 9.4M10.2 .6L.8 9.4" stroke="#c6c8c4" stroke-width="1.7"/></svg>
<svg style="left:186px;top:204px" width="13" height="11" viewBox="0 0 13 11" ><path d="M.8 6.4L4.6 9.8L12.2 .8" fill="none" stroke="#c6c8c4" stroke-width="2"/></svg>
<span class="t" style="left:222.5px;top:201px;font-size:15px;color:#5e5660;font-family:'Liberation Serif',serif;font-style:italic;letter-spacing:-.4px">f<span style="font-size:11px;font-weight:700">x</span></span>
<svg style="left:1349px;top:206px" width="8" height="5.5" viewBox="0 0 8 5.5" ><path d="M.6 .6L4 4.2L7.4 .6" fill="none" stroke="#6a646c" stroke-width="1.7"/></svg>
<svg style="left:56.5px;top:710.5px" width="17" height="15" viewBox="0 0 17 15" ><path d="M5.2 1A6.5 6.5 0 0 0 5.8 13.6" fill="none" stroke="#2c5a40" stroke-width="1.2" stroke-dasharray="3.4 1.6"/><path d="M7.8 .4V6.4M5.5 4.2L7.8 6.6L10.1 4.2M11.4 5H13.6" fill="none" stroke="#2c5a40" stroke-width="1.2"/><path d="M8.4 10L11.2 13.4L15.8 7.4" fill="none" stroke="#2c5a40" stroke-width="1.8"/></svg>
<svg style="left:1079px;top:710px" width="13" height="13" viewBox="0 0 13 13" ><path d="M.5 .5H12.5V12.5H.5ZM4.5 .5V12.5M8.5 .5V12.5M.5 4.5H12.5M.5 8.5H12.5" fill="#f6f6f6" stroke="#6b636e"/></svg>
<svg style="left:1119px;top:710px" width="14" height="13" viewBox="0 0 14 13" ><rect x=".5" y=".5" width="13" height="12" fill="none" stroke="#6b636e"/><rect x="3.5" y="3.5" width="7" height="6" fill="none" stroke="#6b636e"/><path d="M5 5.5H9M5 7.5H9" stroke="#6b636e" stroke-width=".7"/></svg>
<svg style="left:1159px;top:710px" width="14" height="13" viewBox="0 0 14 13" ><path d="M.5 .5H13.5V12.5H.5ZM4.6 .5V7.2M8.6 .5V7.2M.5 7.2H8.6" fill="none" stroke="#6b636e"/></svg>
<svg style="left:1192px;top:715.5px" width="8" height="1" viewBox="0 0 8 1" ><rect width="7.4" height="1" fill="#4a4a4a"/></svg>
<svg style="left:1309.5px;top:712px" width="9" height="9" viewBox="0 0 9 9" ><path d="M0 4.5H9M4.5 0V9" stroke="#4a4a4a" stroke-width="1"/></svg>
<svg style="left:15.8px;top:739.6px" width="17" height="17" viewBox="0 0 17 17" ><path d="M0 2.4L6.9 1.45V7.9H0ZM7.7 1.34L16.5 .1V7.9H7.7ZM0 8.7H6.9V15.2L0 14.2ZM7.7 8.7H16.5V16.5L7.7 15.3Z" fill="#fff"/></svg>
<svg style="left:63px;top:739px" width="18" height="18" viewBox="0 0 18 18" ><circle cx="11.5" cy="6.6" r="5.4" fill="none" stroke="#fff" stroke-width="1.3"/><path d="M7.6 10.4L1.2 16.8" stroke="#fff" stroke-width="1.4"/></svg>
<svg style="left:111.5px;top:740.5px" width="17" height="15" viewBox="0 0 17 15" ><rect x="1.4" y="3.9" width="10" height="7.2" fill="none" stroke="#fff" stroke-width="1.3"/><path d="M.7 0V2.3M.7 14.6V12.7M12.1 0V2.3M12.1 14.6V12.7M.2 .6H12.6M.2 14H12.6" stroke="#fff" stroke-width="1.2" fill="none"/><path d="M15.4 0V14.6" stroke="#fff" stroke-width="1.1"/><rect x="14.5" y="3.9" width="1.9" height="2.8" fill="#fff"/></svg>
<svg style="left:160px;top:739px" width="22" height="18" viewBox="0 0 22 18" ><path d="M0 .8H7.4L9 2.4H21.4V17.2H0Z" fill="#f3cf86"/><path d="M0 3.4H21.4V5H0Z" fill="#e9b85a"/><path d="M3.4 9.6H18V17.2H3.4Z" fill="#3b9ae1"/><path d="M7 12.6H14.4V17.2H7Z" fill="#f3cf86"/><path d="M0 16H21.4V17.2H0Z" fill="#dca94c" opacity=".6"/></svg>
<svg style="left:208.6px;top:736.4px" width="23" height="23" viewBox="0 0 23 23" ><ellipse cx="11.3" cy="11.3" rx="11" ry="11.1" fill="#cf3c1e"/><ellipse cx="11.3" cy="11.3" rx="4.3" ry="7.7" fill="#1f1f1f"/></svg>
<svg style="left:256.5px;top:735.6px" width="25" height="25" viewBox="0 0 25 25" ><defs><linearGradient id="eg" x1="0" y1="0" x2="1" y2="1"><stop offset="0" stop-color="#3fa0e6"/><stop offset="1" stop-color="#1c64b4"/></linearGradient></defs><circle cx="12.4" cy="12.3" r="12.1" fill="url(#eg)"/><path d="M12.4 .2A12.1 12.1 0 0 1 24.5 11.8C24.5 15.6 21.6 17.4 18.8 17.4C15.8 17.4 14.8 15.8 15.6 14.6C16.6 13 15.6 9.4 11.6 9.4C7.4 9.4 3.4 12.4 1.6 17.6A12.1 12.1 0 0 1 12.4 .2Z" fill="#4cb4e0"/><path d="M17 1.2A12.1 12.1 0 0 1 24.5 11.8C24.5 15.6 21.6 17.4 18.8 17.4C15.8 17.4 14.8 15.8 15.6 14.6C16.4 13.4 16 11 14 9.9C16 8 17.4 4.6 17 1.2Z" fill="#8fd09a"/><path d="M10.2 13.4C9.6 17.4 12.6 21.6 18 21.4C19.6 21.3 21 20.8 22 20.1C19.8 23 16.4 24.5 12.4 24.4C8.4 22.8 6.6 17.4 10.2 13.4Z" fill="#1e5aa8"/><ellipse cx="13.6" cy="14.6" rx="2.6" ry="3.1" fill="#1f1f1f"/></svg>
<svg style="left:309px;top:736.6px" width="18" height="22" viewBox="0 0 18 22" ><path d="M0 5.4L11 .4L17.6 2.4V19.8L11 21.8L0 17.4L11 18.6V3.6L4 5.6V15.4L0 17.4Z" fill="#d3481f"/></svg>
<svg style="left:355.8px;top:736.8px" width="23" height="23" viewBox="0 0 23 23" ><circle cx="11.2" cy="11" r="11" fill="#dc4a38"/><path d="M11.2 11L1.7 5.5A11 11 0 0 0 11.2 22L15.9 13.8Z" fill="#3f9f58"/><path d="M11.2 11H22.2A11 11 0 0 1 11.2 22L15.9 13.8Z" fill="#f0c14a"/><path d="M11.2 0A11 11 0 0 1 22.2 11H11.2L1.7 5.5A11 11 0 0 1 11.2 0Z" fill="#dc4a38"/><circle cx="11.2" cy="11" r="5.3" fill="#f2f2f2"/><circle cx="11.2" cy="11" r="4.1" fill="#3f86e8"/></svg>
<svg style="left:405px;top:736.8px" width="22" height="22" viewBox="0 0 22 22" ><rect width="22" height="22" fill="#3a9be6"/><path d="M0 22V16.4L8 7.6L15.4 16L17.6 13.8L22 18.6V22Z" fill="#1d5fb0"/><path d="M8 7.6L15.4 16L12.4 22H0V16.4Z" fill="#174f96"/><rect x="14" y="3.2" width="3.6" height="3.6" rx=".8" fill="#fff"/></svg>
<svg style="left:452.6px;top:736.6px" width="25" height="18" viewBox="0 0 25 18" ><path d="M6.8 1.4Q6.8 .2 8 .2H23.2Q24.4 .2 24.4 1.4V16.4Q24.4 17.6 23.2 17.6H8Q6.8 17.6 6.8 16.4Z" fill="#1f7a48"/><path d="M6.8 .2H15.6V5.8H6.8Z" fill="#3aa56c"/><path d="M15.6 .2H23.2Q24.4 .2 24.4 1.4V5.8H15.6Z" fill="#58c08a"/><path d="M15.6 5.8H24.4V11.6H15.6Z" fill="#2f9a5e"/><path d="M6.8 5.8H15.6V11.6H6.8Z" fill="#1f7a48"/><rect x="0" y="5.6" width="12.6" height="11.8" rx="1.2" fill="#176c3c"/><path d="M3.6 8.2L9 14.8M9 8.2L3.6 14.8" stroke="#fff" stroke-width="1.7"/></svg>
<svg style="left:978px;top:738px" width="24" height="20" viewBox="0 0 24 20" ><path d="M13 .6C17.6 1.6 20.8 6 19.4 10.6C18 9.8 13.6 10 12.6 10.6C15.6 8 15.6 3.6 13 .6Z" fill="#f3b258"/><path d="M4.6 18.8A4.2 4.2 0 0 1 4.2 10.6A5.6 5.6 0 0 1 14.6 9.6A4.7 4.7 0 0 1 18.4 18.8Z" fill="#a9a9a9"/><path d="M3 14.4H20M4 16.6H21" stroke="#d8b878" stroke-width="1" opacity=".7"/></svg>
<svg style="left:1093.5px;top:744px" width="13" height="8" viewBox="0 0 13 8" ><path d="M.8 7.2L6.4 1.2L12 7.2" fill="none" stroke="#fff" stroke-width="1.4"/></svg>
<svg style="left:1115.5px;top:741.5px" width="18" height="12" viewBox="0 0 18 12" ><rect x="5.6" y="3" width="10.4" height="7.8" fill="none" stroke="#fff" stroke-width="1.2"/><rect x="16" y="5.2" width="1.4" height="3.4" fill="#fff"/><rect x="7.2" y="4.6" width="7.2" height="4.6" fill="#fff"/><path d="M1.4 .2V2.6M4.4 .2V2.6" stroke="#fff" stroke-width="1"/><path d="M.4 2.6H5.4V5A2.5 2.5 0 0 1 .4 5Z" fill="#fff" stroke="#1f1f1f" stroke-width=".6"/><path d="M2.9 7.4V11.4" stroke="#fff" stroke-width="1"/></svg>
<svg style="left:1139.5px;top:741px" width="18" height="14" viewBox="0 0 18 14" ><path d="M.6 4.6H3.4L7 1V13L3.4 9.4H.6Z" fill="none" stroke="#fff" stroke-width="1.1" stroke-linejoin="round"/><path d="M9.4 4.4A3.6 3.6 0 0 1 9.4 9.6M11.6 2.4A6.4 6.4 0 0 1 11.6 11.6M13.9 .5A9.2 9.2 0 0 1 13.9 13.5" fill="none" stroke="#fff" stroke-width="1.1"/></svg>
<svg style="left:1166px;top:742px" width="14" height="14" viewBox="0 0 14 14" ><circle cx="11.6" cy="11.8" r="1.5" fill="#fff"/><path d="M7.4 12.6A4.6 4.6 0 0 1 12.4 7.6M4.2 12.6A7.8 7.8 0 0 1 12.4 4.4M1 12.6A11 11 0 0 1 12.4 1.2" fill="none" stroke="#fff" stroke-width="1.2"/></svg>
<svg style="left:1188px;top:741px" width="23" height="13" viewBox="0 0 23 13" ><rect x=".6" y=".6" width="21.6" height="11.6" rx="1" fill="none" stroke="#fff" stroke-width="1.2"/><path d="M3 3.6H20M3 6H20" stroke="#fff" stroke-width="1.1" stroke-dasharray="1.2 1"/><path d="M5 9.2H18" stroke="#fff" stroke-width="1.2"/></svg>
<svg style="left:1325px;top:739px" width="24" height="22" viewBox="0 0 24 22" ><path d="M.8 .8H16.2V12.6H6.4L3 16V12.6H.8Z" fill="#fff"/><path d="M3.2 4H13.8M3.2 6.6H13.8M3.2 9.2H10" stroke="#1f1f1f" stroke-width="1"/><circle cx="16.4" cy="16.2" r="5.3" fill="#1f1f1f" stroke="#8a8a8a" stroke-width="1"/></svg>
<span class="t" style="left:643.40px;top:11.64px;font-size:12px;color:#fff;transform:scaleX(0.9665)">Book1  -  Excel</span>
<span class="t" style="left:1036.90px;top:9.64px;font-size:12px;color:#fff;transform:scaleX(0.9943)">Nitun Kumar Sahu</span>
<span class="t" style="left:19.90px;top:43.14px;font-size:12px;color:#fff;transform:scaleX(0.9564)">File</span>
<span class="t" style="left:132.90px;top:43.14px;font-size:12px;color:#fff;transform:scaleX(0.9695)">Insert</span>
<span class="t" style="left:188.40px;top:43.14px;font-size:12px;color:#fff;transform:scaleX(0.9794)">Page Layout</span>
<span class="t" style="left:280.40px;top:43.14px;font-size:12px;color:#fff;transform:scaleX(0.9997)">Formulas</span>
<span class="t" style="left:356.40px;top:43.14px;font-size:12px;color:#fff;transform:scaleX(0.9740)">Data</span>
<span class="t" style="left:407.40px;top:43.14px;font-size:12px;color:#fff;transform:scaleX(0.9655)">Review</span>
<span class="t" style="left:471.40px;top:43.14px;font-size:12px;color:#fff;transform:scaleX(1.0079)">View</span>
<span class="t" style="left:523.40px;top:43.14px;font-size:12px;color:#fff;transform:scaleX(1.0410)">Help</span>
<span class="t" style="left:575.00px;top:43.14px;font-size:12px;color:#fff;transform:scaleX(0.9036)">WPS PDF</span>
<span class="t" style="left:678.90px;top:43.14px;font-size:12px;color:#fff;transform:scaleX(1.0123)">Tell me what you want to do</span>
<span class="t" style="left:1312.40px;top:43.14px;font-size:12px;color:#fff;transform:scaleX(0.9366)">Share</span>
<span class="t" style="left:72.40px;top:43.14px;font-size:12px;color:#217346;transform:scaleX(1.0620)">Home</span>
<span class="t" style="left:14.90px;top:107.14px;font-size:12px;color:#2e2e2e;transform:scaleX(0.9287)">Paste</span>
<span class="t" style="left:13.90px;top:142.14px;font-size:12px;color:#2e2e2e;transform:scaleX(0.9927)">Clipboard</span>
<span class="t" style="left:107.40px;top:80.84px;font-size:12px;color:#2e2e2e;transform:scaleX(0.9907)">Calibri</span>
<span class="t" style="left:232.40px;top:80.84px;font-size:12px;color:#2e2e2e;transform:scaleX(0.8822)">11</span>
<span class="t" style="left:110.10px;top:110.65px;font-size:13px;color:#2a4a38;transform:scaleX(0.8839);font-weight:700">B</span>
<span class="t" style="left:135.40px;top:110.65px;font-size:13px;color:#2a4a38;transform:scaleX(1.3827);font-weight:700;font-style:italic;font-family:'Liberation Serif', serif">I</span>
<span class="t" style="left:158.10px;top:110.65px;font-size:13px;color:#2a4a38;transform:scaleX(0.9903);text-decoration:underline">U</span>
<span class="t" style="left:191.40px;top:142.14px;font-size:12px;color:#2e2e2e;transform:scaleX(0.9993)">Font</span>
<span class="t" style="left:492.40px;top:80.84px;font-size:12px;color:#2e2e2e;transform:scaleX(0.9705)">Wrap Text</span>
<span class="t" style="left:492.40px;top:112.14px;font-size:12px;color:#2e2e2e;transform:scaleX(1.0094)">Merge &amp; Center</span>
<span class="t" style="left:432.40px;top:142.14px;font-size:12px;color:#2e2e2e;transform:scaleX(1.0117)">Alignment</span>
<span class="t" style="left:619.40px;top:80.84px;font-size:12px;color:#2e2e2e;transform:scaleX(0.9297)">General</span>
<span class="t" style="left:622.40px;top:109.18px;font-size:16px;color:#2e2e2e;transform:scaleX(1.1228)">$</span>
<span class="t" style="left:659.40px;top:109.67px;font-size:15px;color:#2e2e2e;transform:scaleX(1.0492)">%</span>
<span class="t" style="left:686.40px;top:99.93px;font-size:20px;color:#2e2e2e;transform:scaleX(1.2000);font-weight:700;font-family:'Liberation Serif', serif">,</span>
<span class="t" style="left:656.90px;top:142.14px;font-size:12px;color:#2e2e2e;transform:scaleX(0.9722)">Number</span>
<span class="t" style="left:778.40px;top:107.14px;font-size:12px;color:#2e2e2e;transform:scaleX(1.0325)">Conditional</span>
<span class="t" style="left:774.40px;top:123.14px;font-size:12px;color:#2e2e2e;transform:scaleX(1.0460)">Formatting</span>
<span class="t" style="left:849.40px;top:107.14px;font-size:12px;color:#2e2e2e;transform:scaleX(0.9627)">Format as</span>
<span class="t" style="left:856.90px;top:123.14px;font-size:12px;color:#2e2e2e;transform:scaleX(0.9586)">Table</span>
<span class="t" style="left:916.90px;top:107.14px;font-size:12px;color:#2e2e2e;transform:scaleX(0.9917)">Cell</span>
<span class="t" style="left:905.40px;top:123.14px;font-size:12px;color:#2e2e2e;transform:scaleX(0.9484)">Styles</span>
<span class="t" style="left:846.90px;top:142.14px;font-size:12px;color:#2e2e2e;transform:scaleX(0.8719)">Styles</span>
<span class="t" style="left:971.90px;top:107.14px;font-size:12px;color:#2e2e2e;transform:scaleX(0.9828)">Insert</span>
<span class="t" style="left:1012.40px;top:107.14px;font-size:12px;color:#2e2e2e;transform:scaleX(0.9514)">Delete</span>
<span class="t" style="left:1052.40px;top:107.14px;font-size:12px;color:#2e2e2e;transform:scaleX(1.0127)">Format</span>
<span class="t" style="left:1017.40px;top:142.14px;font-size:12px;color:#2e2e2e;transform:scaleX(0.8998)">Cells</span>
<span class="t" style="left:1131.40px;top:72.84px;font-size:12px;color:#2e2e2e;transform:scaleX(1.0130)">AutoSum</span>
<span class="t" style="left:1131.40px;top:95.14px;font-size:12px;color:#2e2e2e;transform:scaleX(1.0438)">Fill</span>
<span class="t" style="left:1131.40px;top:119.14px;font-size:12px;color:#2e2e2e;transform:scaleX(0.9760)">Clear</span>
<span class="t" style="left:1207.40px;top:107.14px;font-size:12px;color:#2e2e2e;transform:scaleX(1.0192)">Sort &amp;</span>
<span class="t" style="left:1205.90px;top:123.14px;font-size:12px;color:#2e2e2e;transform:scaleX(0.9936)">Filter</span>
<span class="t" style="left:1250.90px;top:107.14px;font-size:12px;color:#2e2e2e;transform:scaleX(1.0523)">Find &amp;</span>
<span class="t" style="left:1247.90px;top:123.14px;font-size:12px;color:#2e2e2e;transform:scaleX(0.9593)">Select</span>
<span class="t" style="left:1182.40px;top:142.14px;font-size:12px;color:#2e2e2e;transform:scaleX(1.0217)">Editing</span>
<span class="t" style="left:39.80px;top:166.14px;font-size:12px;color:#333;transform:scaleX(0.8883)">GET GENUINE OFFICE</span>
<span class="t" style="left:164.90px;top:166.14px;font-size:12px;color:#333;transform:scaleX(1.0054)">Your license isn&#x27;t genuine, and you may be a victim of software counterfeiting. Avoid interruption and keep your files safe with genuine Office today.</span>
<span class="t" style="left:981.90px;top:165.64px;font-size:12px;color:#333;transform:scaleX(0.9966)">Get genuine Office</span>
<span class="t" style="left:1123.90px;top:165.64px;font-size:12px;color:#333;transform:scaleX(0.9857)">Learn more</span>
<span class="t" style="left:10.90px;top:203.64px;font-size:12px;color:#333;transform:scaleX(1.0901)">H14</span>
<span class="t" style="left:53.73px;top:235.65px;font-size:12.8px;color:#262626">A</span>
<span class="t" style="left:117.73px;top:235.65px;font-size:12.8px;color:#262626">B</span>
<span class="t" style="left:181.38px;top:235.65px;font-size:12.8px;color:#262626">C</span>
<span class="t" style="left:245.38px;top:235.65px;font-size:12.8px;color:#262626">D</span>
<span class="t" style="left:309.73px;top:235.65px;font-size:12.8px;color:#262626">E</span>
<span class="t" style="left:374.09px;top:235.65px;font-size:12.8px;color:#262626">F</span>
<span class="t" style="left:437.02px;top:235.65px;font-size:12.8px;color:#262626">G</span>
<span class="t" style="left:501.38px;top:235.65px;font-size:12.8px;color:#217346">H</span>
<span class="t" style="left:568.22px;top:235.65px;font-size:12.8px;color:#262626">I</span>
<span class="t" style="left:630.80px;top:235.65px;font-size:12.8px;color:#262626">J</span>
<span class="t" style="left:693.73px;top:235.65px;font-size:12.8px;color:#262626">K</span>
<span class="t" style="left:758.44px;top:235.65px;font-size:12.8px;color:#262626">L</span>
<span class="t" style="left:820.66px;top:235.65px;font-size:12.8px;color:#262626">M</span>
<span class="t" style="left:885.38px;top:235.65px;font-size:12.8px;color:#262626">N</span>
<span class="t" style="left:949.02px;top:235.65px;font-size:12.8px;color:#262626">O</span>
<span class="t" style="left:1013.73px;top:235.65px;font-size:12.8px;color:#262626">P</span>
<span class="t" style="left:1077.02px;top:235.65px;font-size:12.8px;color:#262626">Q</span>
<span class="t" style="left:1141.38px;top:235.65px;font-size:12.8px;color:#262626">R</span>
<span class="t" style="left:1205.73px;top:235.65px;font-size:12.8px;color:#262626">S</span>
<span class="t" style="left:1270.09px;top:235.65px;font-size:12.8px;color:#262626">T</span>
<span class="t" style="left:1333.38px;top:235.65px;font-size:12.8px;color:#262626">U</span>
<span class="t" style="left:9.04px;top:256.85px;font-size:12.8px;color:#262626">1</span>
<span class="t" style="left:9.04px;top:276.85px;font-size:12.8px;color:#262626">2</span>
<span class="t" style="left:9.04px;top:296.85px;font-size:12.8px;color:#262626">3</span>
<span class="t" style="left:9.04px;top:316.85px;font-size:12.8px;color:#262626">4</span>
<span class="t" style="left:9.04px;top:336.85px;font-size:12.8px;color:#262626">5</span>
<span class="t" style="left:9.04px;top:356.85px;font-size:12.8px;color:#262626">6</span>
<span class="t" style="left:9.04px;top:376.85px;font-size:12.8px;color:#262626">7</span>
<span class="t" style="left:9.04px;top:396.85px;font-size:12.8px;color:#262626">8</span>
<span class="t" style="left:9.04px;top:416.85px;font-size:12.8px;color:#262626">9</span>
<span class="t" style="left:5.48px;top:436.85px;font-size:12.8px;color:#262626">10</span>
<span class="t" style="left:5.95px;top:456.85px;font-size:12.8px;color:#262626">11</span>
<span class="t" style="left:5.48px;top:476.85px;font-size:12.8px;color:#262626">12</span>
<span class="t" style="left:5.48px;top:496.85px;font-size:12.8px;color:#262626">13</span>
<span class="t" style="left:5.48px;top:516.85px;font-size:12.8px;color:#217346">14</span>
<span class="t" style="left:5.48px;top:536.85px;font-size:12.8px;color:#262626">15</span>
<span class="t" style="left:5.48px;top:556.85px;font-size:12.8px;color:#262626">16</span>
<span class="t" style="left:5.48px;top:576.85px;font-size:12.8px;color:#262626">17</span>
<span class="t" style="left:5.48px;top:596.85px;font-size:12.8px;color:#262626">18</span>
<span class="t" style="left:5.48px;top:616.85px;font-size:12.8px;color:#262626">19</span>
<span class="t" style="left:5.48px;top:636.85px;font-size:12.8px;color:#262626">20</span>
<span class="t" style="left:5.48px;top:656.85px;font-size:12.8px;color:#262626">21</span>
<span class="t" style="left:27.70px;top:256.05px;font-size:13.2px;color:#000;transform:scaleX(0.9893);font-weight:700">Order ID</span>
<span class="t" style="left:91.90px;top:256.05px;font-size:13.2px;color:#000;transform:scaleX(0.9633);font-weight:700">Product</span>
<span class="t" style="left:155.40px;top:256.05px;font-size:13.2px;color:#000;transform:scaleX(1.0190);font-weight:700">Quantity</span>
<span class="t" style="left:219.90px;top:256.05px;font-size:13.2px;color:#000;transform:scaleX(0.9041);font-weight:700">Cost</span>
<span class="t" style="left:58.30px;top:276.05px;font-size:13.2px;color:#000;transform:scaleX(0.9712)">1024</span>
<span class="t" style="left:91.90px;top:276.05px;font-size:13.2px;color:#000;transform:scaleX(1.0968)">Apple</span>
<span class="t" style="left:207.40px;top:276.05px;font-size:13.2px;color:#000;transform:scaleX(1.0894)">5</span>
<span class="t" style="left:257.20px;top:276.05px;font-size:13.2px;color:#000;transform:scaleX(0.9584)">200</span>
<span class="t" style="left:58.30px;top:296.05px;font-size:13.2px;color:#000;transform:scaleX(0.9712)">2068</span>
<span class="t" style="left:91.90px;top:296.05px;font-size:13.2px;color:#000;transform:scaleX(1.0507)">Carrot</span>
<span class="t" style="left:207.40px;top:296.05px;font-size:13.2px;color:#000;transform:scaleX(1.0894)">7</span>
<span class="t" style="left:257.20px;top:296.05px;font-size:13.2px;color:#000;transform:scaleX(0.9584)">150</span>
<span class="t" style="left:58.30px;top:336.05px;font-size:13.2px;color:#000;transform:scaleX(0.9712)">2345</span>
<span class="t" style="left:91.90px;top:336.05px;font-size:13.2px;color:#000;transform:scaleX(1.0025)">Beans</span>
<span class="t" style="left:200.40px;top:336.05px;font-size:13.2px;color:#000;transform:scaleX(1.0224)">15</span>
<span class="t" style="left:257.20px;top:336.05px;font-size:13.2px;color:#000;transform:scaleX(0.9584)">220</span>
<span class="t" style="left:58.30px;top:356.05px;font-size:13.2px;color:#000;transform:scaleX(0.9712)">6466</span>
<span class="t" style="left:91.90px;top:356.05px;font-size:13.2px;color:#000;transform:scaleX(1.1228)">Tofu</span>
<span class="t" style="left:207.40px;top:356.05px;font-size:13.2px;color:#000;transform:scaleX(1.0894)">9</span>
<span class="t" style="left:257.20px;top:356.05px;font-size:13.2px;color:#000;transform:scaleX(0.9584)">250</span>
<span class="t" style="left:646.40px;top:327.79px;font-size:25px;color:#3f9bd8;transform:scaleX(1.0791)">Before</span>
<span class="t" style="left:111.40px;top:685.15px;font-size:13px;color:#217346;transform:scaleX(0.9521);font-weight:700">Sheet1</span>
<span class="t" style="left:7.90px;top:712.33px;font-size:11.6px;color:#333;transform:scaleX(0.9399)">Ready</span>
<span class="t" style="left:74.40px;top:712.33px;font-size:11.6px;color:#333;transform:scaleX(1.0043)">Accessibility: Good to go</span>
<span class="t" style="left:1331.90px;top:712.33px;font-size:11.6px;color:#333;transform:scaleX(0.8936)">100%</span>
<span class="t" style="left:1008.90px;top:741.92px;font-size:14.5px;color:#fff;transform:scaleX(0.9412)">28°C</span>
<span class="t" style="left:1047.40px;top:741.92px;font-size:14.5px;color:#fff;transform:scaleX(0.9156)">Haze</span>
<span class="t" style="left:1222.40px;top:742.14px;font-size:12px;color:#fff;transform:scaleX(0.8841)">ENG</span>
<span class="t" style="left:1261.40px;top:733.14px;font-size:12px;color:#fff;transform:scaleX(0.9507)">9:54 PM</span>
<span class="t" style="left:1258.40px;top:750.64px;font-size:12px;color:#fff;transform:scaleX(1.0167)">08/28/22</span>
<span class="t" style="left:1338.00px;top:750.47px;font-size:10.5px;color:#fff;transform:scaleX(1.0952)">3</span>
</body></html>
